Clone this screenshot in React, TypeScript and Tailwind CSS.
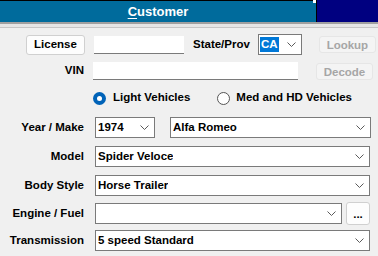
import React from "react";

function Chevron() {
  return (
    <svg width="9" height="5" viewBox="0 0 9 5" className="shrink-0">
      <path d="M0.5 0.5 L4.5 4.5 L8.5 0.5" fill="none" stroke="#5a5a5a" strokeWidth="1" />
    </svg>
  );
}

function Select({ value, width, className = "" }: { value: string; width: string; className?: string }) {
  return (
    <div
      className={`flex h-[21px] items-center justify-between border border-[#7a7a7a] bg-white pl-[2px] pr-[5px] ${width} ${className}`}
    >
      <span className="truncate">{value}</span>
      <Chevron />
    </div>
  );
}

function Label({ children }: { children: React.ReactNode }) {
  return <div className="w-[85px] shrink-0 pr-[1px] text-right">{children}</div>;
}

function Radio({ checked }: { checked: boolean }) {
  return checked ? (
    <span className="flex h-[13px] w-[13px] items-center justify-center rounded-full bg-[#0063b8]">
      <span className="h-[5px] w-[5px] rounded-full bg-white" />
    </span>
  ) : (
    <span className="h-[13px] w-[13px] rounded-full border border-[#555] bg-white" />
  );
}

export default function App() {
  return (
    <div className="h-[256px] w-[378px] overflow-hidden bg-[#f0f0f0] font-['Liberation_Sans',Arial,sans-serif] text-[11.5px] font-bold text-black">
      {/* header tab */}
      <div className="flex h-[22px]">
        <div className="relative flex w-[317px] items-center justify-center border-r border-t border-black bg-[#006b9c] text-[13px] text-white">
          <span>
            <span className="underline underline-offset-2">C</span>ustomer
          </span>
          <span className="absolute -top-px right-0 h-[3px] w-[3px] bg-white" />
        </div>
        <div className="flex-1 bg-[#000080]" />
      </div>
      <div className="h-[2px] bg-[#a0a0a0]" />
      <div className="h-[3px] bg-[#e6e6e6]" />
      <div className="h-px bg-[#c6c6c6]" />

      {/* license row */}
      <div className="mt-[6px] flex h-[21px] items-center">
        <button className="ml-[26px] h-[20px] w-[59px] rounded-[3px] border border-[#d0d0d0] bg-[#fdfdfd] text-center">
          License
        </button>
        <div className="ml-[9px] h-[18px] w-[90px] border-b border-[#7a7a7a] bg-white" />
        <span className="ml-[9px]">State/Prov</span>
        <div className="ml-[8px] flex h-[21px] w-[44px] items-center justify-between border border-[#7a7a7a] bg-white pl-[1px] pr-[5px]">
          <span className="bg-[#0078d7] px-[1px] leading-[15px] text-white">CA</span>
          <Chevron />
        </div>
        <button className="ml-[17px] h-[17px] w-[57px] rounded-[3px] border border-[#e6e6e6] bg-[#f4f4f4] text-[#a6a6a6]">
          Lookup
        </button>
      </div>

      {/* vin row */}
      <div className="mt-[7px] flex h-[18px] items-center">
        <Label>VIN</Label>
        <div className="ml-[8px] h-[18px] w-[205px] border-b border-[#7a7a7a] bg-white" />
        <button className="ml-[18px] h-[17px] w-[57px] rounded-[3px] border border-[#e6e6e6] bg-[#f4f4f4] text-[#a6a6a6]">
          Decode
        </button>
      </div>

      {/* vehicle type */}
      <div className="mt-[11px] flex h-[14px] items-center">
        <div className="ml-[93px] flex items-center gap-[7px]">
          <Radio checked />
          <span>Light Vehicles</span>
        </div>
        <div className="ml-[27px] flex items-center gap-[6px]">
          <Radio checked={false} />
          <span>Med and HD Vehicles</span>
        </div>
      </div>

      {/* vehicle details */}
      <div className="mt-[12px] flex flex-col">
        <div className="flex items-center">
          <Label>Year / Make</Label>
          <Select value="1974" width="w-[60px]" className="ml-[10px]" />
          <Select value="Alfa Romeo" width="w-[201px]" className="ml-[15px]" />
        </div>
        <div className="mt-[8px] flex items-center">
          <Label>Model</Label>
          <Select value="Spider Veloce" width="w-[275px]" className="ml-[10px]" />
        </div>
        <div className="mt-[8px] flex items-center">
          <Label>Body Style</Label>
          <Select value="Horse Trailer" width="w-[275px]" className="ml-[10px]" />
        </div>
        <div className="mt-[7px] flex h-[21px] items-center">
          <Label>Engine / Fuel</Label>
          <Select value="" width="w-[247px]" className="ml-[10px]" />
          <button className="-my-[1px] ml-[4px] h-[23px] w-[24px] rounded-[3px] border border-[#d0d0d0] bg-[#fdfdfd] leading-[14px]">
            ...
          </button>
        </div>
        <div className="mt-[6px] flex items-center">
          <Label>Transmission</Label>
          <Select value="5 speed Standard" width="w-[275px]" className="ml-[10px]" />
        </div>
      </div>
    </div>
  );
}
